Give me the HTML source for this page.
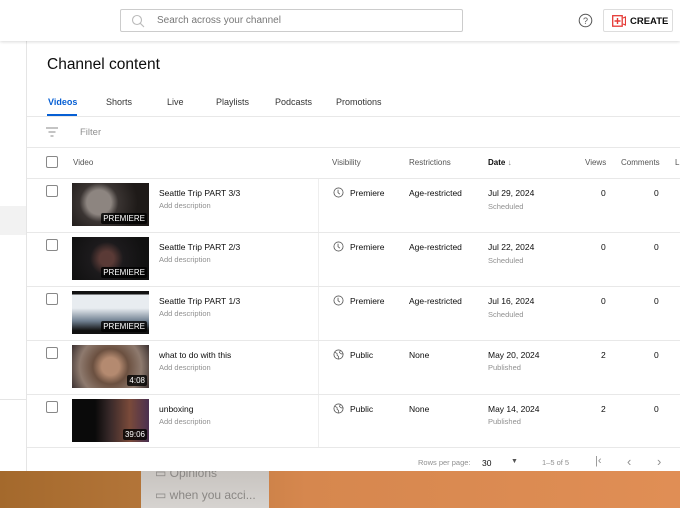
<!DOCTYPE html>
<html><head><style>
*{box-sizing:border-box;margin:0;padding:0}
body{width:680px;height:508px;overflow:hidden;position:relative;font-family:"Liberation Sans",sans-serif;color:#0d0d0d;background:#fff}
.abs{position:absolute}
.bottom{left:0;top:471px;width:680px;height:37px;background:linear-gradient(90deg,#a4692c 0%,#b27438 20%,#d6874e 45%,#e08e55 100%)}
.finder{left:141px;top:471px;width:128px;height:37px;background:linear-gradient(#c8c4c0,#d6d3d0);color:#8a8784;font-size:12px}
.top{left:0;top:0;width:680px;height:41px;background:#fff;box-shadow:0 1px 3px rgba(0,0,0,.15);z-index:2}
.search{left:120px;top:9px;width:343px;height:23px;border:1px solid #ccc;border-radius:2px;font-size:10px;color:#777}
.create{left:603px;top:9px;width:70px;height:23px;border:1px solid #ddd;border-radius:2px;font-size:9.5px;font-weight:bold}
.hline{height:1px;background:#e8e8e8}
.t{font-size:8.5px;white-space:nowrap}
.g{color:#909090}
.cb{width:12px;height:12px;border:1.3px solid #888;border-radius:2px;background:#fff}
.th{left:72px;width:77px;height:43px;overflow:hidden}
.badge{position:absolute;right:2px;bottom:2px;background:rgba(0,0,0,.8);color:#fff;font-size:8px;padding:1px 2px;border-radius:2px}
.ic{position:absolute;width:11px;height:11px}
</style></head><body>
<div class="abs bottom"></div>
<div class="abs finder"><div class="abs" style="left:14px;top:-5px">▭ Opinions</div><div class="abs" style="left:14px;top:17px">▭ when you acci...</div></div>
<div class="abs" style="left:0;top:41px;width:680px;height:430px;background:#fff"></div>
<div class="abs" style="left:0;top:206px;width:26px;height:29px;background:#f2f2f2"></div>
<div class="abs" style="left:0;top:399px;width:26px;height:1px;background:#e5e5e5"></div>
<div class="abs" style="left:26px;top:41px;width:1px;height:430px;background:#e5e5e5"></div>
<div class="abs top">
 <div class="abs search"><svg class="abs" style="left:10px;top:4px" width="14" height="14" viewBox="0 0 14 14"><circle cx="6" cy="6" r="4.5" fill="none" stroke="#bbb" stroke-width="1.1"/><path d="M9.3 9.3L13 13" stroke="#bbb" stroke-width="1.1"/></svg><span class="abs" style="left:36px;top:5px">Search across your channel</span></div>
 <svg class="abs" style="left:578px;top:13px" width="15" height="15" viewBox="0 0 15 15"><circle cx="7.5" cy="7.5" r="6.3" fill="none" stroke="#555" stroke-width="1"/><text x="7.5" y="10.8" font-size="9" text-anchor="middle" fill="#555" font-family="Liberation Sans">?</text></svg>
 <div class="abs create"><svg class="abs" style="left:8px;top:5px" width="14" height="12" viewBox="0 0 14 12"><rect x="0.7" y="0.7" width="9.5" height="10.5" fill="none" stroke="#e53935" stroke-width="1.3"/><path d="M5.5 3v6M2.5 6h6" stroke="#e53935" stroke-width="1.4"/><path d="M11 3l2.5 -1v8l-2.5-1" fill="none" stroke="#e53935" stroke-width="1.2"/></svg><span class="abs" style="left:26px;top:6px">CREATE</span></div>
</div>
<div class="abs" style="left:47px;top:56px;font-size:15.5px;font-weight:500">Channel content</div>
<div class="abs t" style="left:48px;top:97px;font-size:9px;color:#065fd4;font-weight:bold">Videos</div>
<div class="abs" style="left:47px;top:114px;width:30px;height:2px;background:#065fd4"></div>
<div class="abs t" style="left:106px;top:97px;font-size:9px;color:#333">Shorts</div>
<div class="abs t" style="left:167px;top:97px;font-size:9px;color:#333">Live</div>
<div class="abs t" style="left:216px;top:97px;font-size:9px;color:#333">Playlists</div>
<div class="abs t" style="left:275px;top:97px;font-size:9px;color:#333">Podcasts</div>
<div class="abs t" style="left:336px;top:97px;font-size:9px;color:#333">Promotions</div>
<div class="abs hline" style="left:27px;top:116px;width:653px"></div>
<svg class="abs" style="left:45px;top:126px" width="14" height="12" viewBox="0 0 14 12"><path d="M1 2h12M3.5 6h7M5.5 10h3" stroke="#888" stroke-width="1.1"/></svg>
<div class="abs t g" style="left:80px;top:127px;font-size:9.5px">Filter</div>
<div class="abs hline" style="left:27px;top:147px;width:653px"></div>
<div class="abs cb" style="left:46px;top:156px"></div>
<div class="abs t" style="left:73px;top:158px;color:#555;font-size:8px">Video</div>
<div class="abs t" style="left:332px;top:158px;color:#555;font-size:8px">Visibility</div>
<div class="abs t" style="left:409px;top:158px;color:#555;font-size:8px">Restrictions</div>
<div class="abs t" style="left:488px;top:158px;font-weight:bold;font-size:8px">Date <span style="color:#888;font-weight:normal">↓</span></div>
<div class="abs t" style="left:585px;top:158px;color:#555;font-size:8px">Views</div>
<div class="abs t" style="left:621px;top:158px;color:#555;font-size:8px">Comments</div>
<div class="abs t" style="left:675px;top:158px;color:#555;font-size:8px">Li</div>
<div class="abs hline" style="left:27px;top:178px;width:653px"></div>
<div class="abs" style="left:318px;top:179px;width:1px;height:268px;background:#eee"></div>

<svg width="0" height="0" style="position:absolute"><defs>
<symbol id="clk" viewBox="0 0 12 12"><circle cx="6" cy="6" r="5" fill="none" stroke="#555" stroke-width="0.9"/><path d="M5.5 3v3.2l2 1.6" fill="none" stroke="#555" stroke-width="0.9"/></symbol>
<symbol id="glb" viewBox="0 0 12 12"><circle cx="6" cy="6" r="5" fill="none" stroke="#555" stroke-width="0.9"/><path d="M2 3.5l2.5 1.5v2l1.5 1v2.5M8 1.8l-1 2 2 1.5h2.5" fill="none" stroke="#555" stroke-width="0.8"/></symbol>
</defs></svg>

<!-- rows -->
<div class="abs cb" style="left:46px;top:185px"></div>
<div class="abs th" style="top:183px;background:radial-gradient(circle at 35% 45%,#8d8580 0 22%,#3a3432 35%,#1e1a18 70%)"><span class="badge">PREMIERE</span></div>
<div class="abs t" style="left:159px;top:188px">Seattle Trip PART 3/3</div>
<div class="abs t g" style="left:159px;top:201px;font-size:7.5px">Add description</div>
<svg class="ic" style="left:333px;top:187px"><use href="#clk"/></svg><div class="abs t" style="left:350px;top:188px">Premiere</div>
<div class="abs t" style="left:409px;top:188px">Age-restricted</div>
<div class="abs t" style="left:488px;top:188px">Jul 29, 2024</div>
<div class="abs t g" style="left:488px;top:202px;font-size:7.5px">Scheduled</div>
<div class="abs t" style="left:601px;top:188px">0</div><div class="abs t" style="left:654px;top:188px">0</div>
<div class="abs hline" style="left:27px;top:232px;width:653px"></div>

<div class="abs cb" style="left:46px;top:239px"></div>
<div class="abs th" style="top:237px;background:radial-gradient(circle at 45% 50%,#5a3a36 0 15%,#1c1a1c 35%,#111 80%)"><span class="badge">PREMIERE</span></div>
<div class="abs t" style="left:159px;top:242px">Seattle Trip PART 2/3</div>
<div class="abs t g" style="left:159px;top:255px;font-size:7.5px">Add description</div>
<svg class="ic" style="left:333px;top:241px"><use href="#clk"/></svg><div class="abs t" style="left:350px;top:242px">Premiere</div>
<div class="abs t" style="left:409px;top:242px">Age-restricted</div>
<div class="abs t" style="left:488px;top:242px">Jul 22, 2024</div>
<div class="abs t g" style="left:488px;top:256px;font-size:7.5px">Scheduled</div>
<div class="abs t" style="left:601px;top:242px">0</div><div class="abs t" style="left:654px;top:242px">0</div>
<div class="abs hline" style="left:27px;top:286px;width:653px"></div>

<div class="abs cb" style="left:46px;top:293px"></div>
<div class="abs th" style="top:291px;background:linear-gradient(#111 0 8%,#e8ecf0 8% 40%,#6f7f90 70%,#111 92%)"><span class="badge">PREMIERE</span></div>
<div class="abs t" style="left:159px;top:296px">Seattle Trip PART 1/3</div>
<div class="abs t g" style="left:159px;top:309px;font-size:7.5px">Add description</div>
<svg class="ic" style="left:333px;top:295px"><use href="#clk"/></svg><div class="abs t" style="left:350px;top:296px">Premiere</div>
<div class="abs t" style="left:409px;top:296px">Age-restricted</div>
<div class="abs t" style="left:488px;top:296px">Jul 16, 2024</div>
<div class="abs t g" style="left:488px;top:310px;font-size:7.5px">Scheduled</div>
<div class="abs t" style="left:601px;top:296px">0</div><div class="abs t" style="left:654px;top:296px">0</div>
<div class="abs hline" style="left:27px;top:340px;width:653px"></div>

<div class="abs cb" style="left:46px;top:347px"></div>
<div class="abs th" style="top:345px;background:radial-gradient(circle at 50% 50%,#b48a70 0 20%,#6b5040 40%,#8e7a6e 70%,#3a3030 100%)"><span class="badge">4:08</span></div>
<div class="abs t" style="left:159px;top:350px">what to do with this</div>
<div class="abs t g" style="left:159px;top:363px;font-size:7.5px">Add description</div>
<svg class="ic" style="left:333px;top:349px"><use href="#glb"/></svg><div class="abs t" style="left:350px;top:350px">Public</div>
<div class="abs t" style="left:409px;top:350px">None</div>
<div class="abs t" style="left:488px;top:350px">May 20, 2024</div>
<div class="abs t g" style="left:488px;top:363px;font-size:7.5px">Published</div>
<div class="abs t" style="left:601px;top:350px">2</div><div class="abs t" style="left:654px;top:350px">0</div>
<div class="abs hline" style="left:27px;top:394px;width:653px"></div>

<div class="abs cb" style="left:46px;top:401px"></div>
<div class="abs th" style="top:399px;background:linear-gradient(90deg,#0a0a0a 0 30%,#3a2a2a 50%,#7a4a3a 75%,#4a3050 100%)"><span class="badge">39:06</span></div>
<div class="abs t" style="left:159px;top:404px">unboxing</div>
<div class="abs t g" style="left:159px;top:417px;font-size:7.5px">Add description</div>
<svg class="ic" style="left:333px;top:403px"><use href="#glb"/></svg><div class="abs t" style="left:350px;top:404px">Public</div>
<div class="abs t" style="left:409px;top:404px">None</div>
<div class="abs t" style="left:488px;top:404px">May 14, 2024</div>
<div class="abs t g" style="left:488px;top:417px;font-size:7.5px">Published</div>
<div class="abs t" style="left:601px;top:404px">2</div><div class="abs t" style="left:654px;top:404px">0</div>
<div class="abs hline" style="left:27px;top:447px;width:653px"></div>

<div class="abs t g" style="left:418px;top:458px;font-size:7.5px">Rows per page:</div>
<div class="abs t" style="left:482px;top:458px">30</div>
<div class="abs t" style="left:511px;top:458px;color:#555;font-size:7px">▼</div>
<div class="abs t g" style="left:542px;top:458px;font-size:7.5px">1–5 of 5</div>
<div class="abs t g" style="left:595px;top:455px;font-size:11px">|‹</div>
<div class="abs t g" style="left:627px;top:454px;font-size:13px">‹</div>
<div class="abs t g" style="left:657px;top:454px;font-size:13px">›</div>
</body></html>
